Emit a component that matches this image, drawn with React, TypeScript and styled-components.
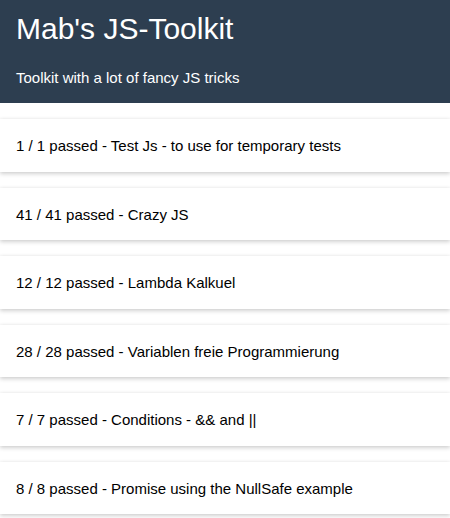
import React from "react";
import styled, { createGlobalStyle } from "styled-components";

const Global = createGlobalStyle`
  html, body { margin: 0; padding: 0; background: #fff; }
  body { font-family: "Liberation Sans", Arial, sans-serif; color: #000; }
`;

const Header = styled.header`
  background: #2d3e50;
  color: #fff;
  padding: 12.4px 16px 17px;
`;

const Title = styled.h1`
  margin: 0;
  font-size: 30px;
  font-weight: 400;
  line-height: 34.5px;
`;

const Subtitle = styled.p`
  margin: 22.3px 0 0;
  font-size: 15px;
  line-height: 17.2px;
`;

const List = styled.main`
  display: flex;
  flex-direction: column;
  gap: 16px;
  padding: 16px 0;
`;

const Card = styled.div`
  background: #fff;
  height: 52.5px;
  box-sizing: border-box;
  padding: 0 16px;
  display: flex;
  align-items: center;
  font-size: 15px;
  color: #000;
  box-shadow: 0 2px 4px rgba(0, 0, 0, 0.18), 0 -1px 3px rgba(0, 0, 0, 0.05);
`;

const suites = [
  { passed: 1, total: 1, name: "Test Js - to use for temporary tests" },
  { passed: 41, total: 41, name: "Crazy JS" },
  { passed: 12, total: 12, name: "Lambda Kalkuel" },
  { passed: 28, total: 28, name: "Variablen freie Programmierung" },
  { passed: 7, total: 7, name: "Conditions - && and ||" },
  { passed: 8, total: 8, name: "Promise using the NullSafe example" },
];

export default function App() {
  return (
    <>
      <Global />
      <Header>
        <Title>Mab's JS-Toolkit</Title>
        <Subtitle>Toolkit with a lot of fancy JS tricks</Subtitle>
      </Header>
      <List>
        {suites.map((s) => (
          <Card key={s.name}>
            {s.passed} / {s.total} passed - {s.name}
          </Card>
        ))}
      </List>
    </>
  );
}
